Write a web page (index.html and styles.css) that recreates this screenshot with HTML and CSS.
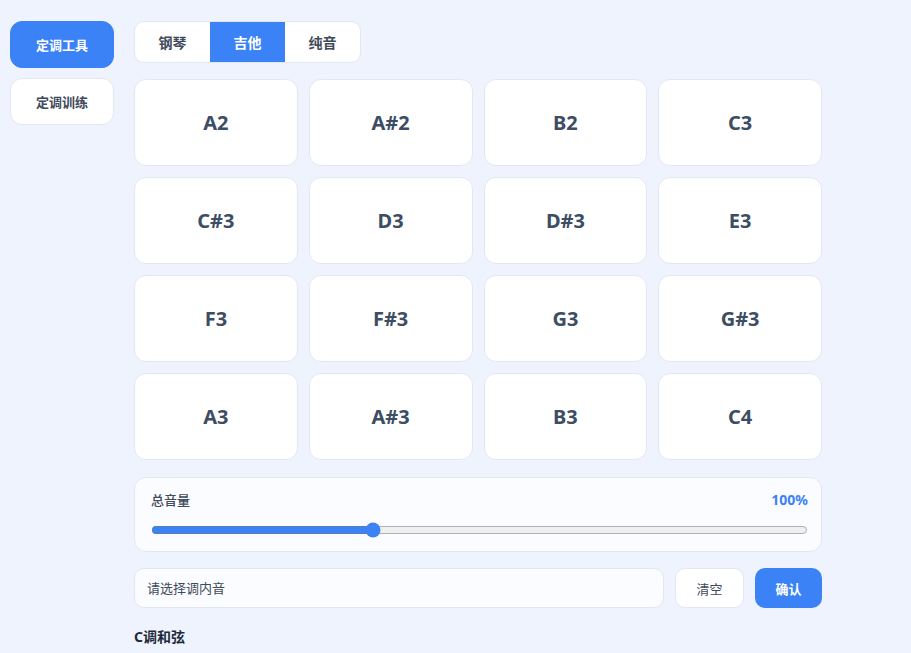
FILE: index.html
```html
<!DOCTYPE html>
<html lang="zh-CN">

<head>
    <meta charset="UTF-8">
    <meta name="viewport" content="width=device-width, initial-scale=1.0">
    <title>定调工具</title>
    <link rel="stylesheet" href="styles.css">
</head>

<body>
    <div class="layout">
        <nav class="sidebar">
            <button class="side-btn active">定调工具</button>
            <button class="side-btn">定调训练</button>
        </nav>

        <main class="main">
            <div class="tabs">
                <button class="tab">钢琴</button>
                <button class="tab active">吉他</button>
                <button class="tab">纯音</button>
            </div>

            <div class="notes">
                <button class="note">A2</button>
                <button class="note">A#2</button>
                <button class="note">B2</button>
                <button class="note">C3</button>
                <button class="note">C#3</button>
                <button class="note">D3</button>
                <button class="note">D#3</button>
                <button class="note">E3</button>
                <button class="note">F3</button>
                <button class="note">F#3</button>
                <button class="note">G3</button>
                <button class="note">G#3</button>
                <button class="note">A3</button>
                <button class="note">A#3</button>
                <button class="note">B3</button>
                <button class="note">C4</button>
            </div>

            <div class="volume">
                <div class="volume-head">
                    <span class="volume-label">总音量</span>
                    <span class="volume-value">100%</span>
                </div>
                <input class="volume-range" type="range" min="0" max="300" value="100">
            </div>

            <div class="answer-row">
                <input class="answer-input" type="text" placeholder="请选择调内音">
                <button class="btn-clear">清空</button>
                <button class="btn-confirm">确认</button>
            </div>

            <h3 class="section-title">C调和弦</h3>
        </main>
    </div>
</body>

</html>
```

FILE: styles.css
```css
body {
    margin: 0;
    background-color: #eef3fd;
    font-family: "Noto Sans", "Noto Sans CJK SC", sans-serif;
    color: #334155;
}

button,
input {
    font-family: inherit;
}

.layout {
    display: flex;
    gap: 20px;
    padding: 21px 10px 0 10px;
}

.sidebar {
    display: flex;
    flex-direction: column;
    gap: 10px;
    width: 104px;
    flex-shrink: 0;
}

.side-btn {
    height: 47px;
    border: 1px solid #e2e8f3;
    border-radius: 12px;
    background: #fff;
    color: #3f4a5a;
    font-size: 13px;
    font-weight: 700;
    cursor: pointer;
}

.side-btn.active {
    background: #3b82f6;
    border-color: #3b82f6;
    color: #fff;
}

.main {
    width: 688px;
}

.tabs {
    display: inline-flex;
    height: 42px;
    border: 1px solid #e2e8f3;
    border-radius: 10px;
    background: #fff;
    overflow: hidden;
    box-sizing: border-box;
}

.tab {
    width: 75px;
    border: none;
    background: transparent;
    color: #3f4a5a;
    font-size: 14px;
    font-weight: 700;
    cursor: pointer;
}

.tab.active {
    background: #3b82f6;
    color: #fff;
}

.notes {
    display: grid;
    grid-template-columns: repeat(4, 1fr);
    gap: 11px;
    margin-top: 16px;
}

.note {
    height: 87px;
    border: 1px solid #e2e8f3;
    border-radius: 12px;
    background: #fff;
    color: #3d4d63;
    font-size: 20px;
    font-weight: 700;
    cursor: pointer;
}

.volume {
    margin-top: 17px;
    padding: 12px 13px 13px 16px;
    border: 1px solid #e2e8f3;
    border-radius: 12px;
    background: #fbfcff;
}

.volume-head {
    display: flex;
    justify-content: space-between;
    align-items: center;
}

.volume-label {
    font-size: 13px;
    font-weight: 500;
    color: #3f4a5a;
}

.volume-value {
    font-size: 14px;
    font-weight: 700;
    color: #3b82f6;
}

.volume-range {
    display: block;
    width: 100%;
    margin: 13px 0 0 0;
    accent-color: #3b82f6;
}

.answer-row {
    display: flex;
    gap: 11px;
    margin-top: 16px;
    height: 40px;
}

.answer-input {
    flex: 1;
    padding: 0 12px;
    border: 1px solid #e2e8f3;
    border-radius: 10px;
    background: #fbfcff;
    font-size: 13px;
    color: #334155;
}

.answer-input::placeholder {
    color: #3f4a5a;
}

.btn-clear {
    width: 69px;
    border: 1px solid #e2e8f3;
    border-radius: 10px;
    background: #fff;
    color: #3f4a5a;
    font-size: 13px;
    cursor: pointer;
}

.btn-confirm {
    width: 67px;
    border: none;
    border-radius: 10px;
    background: #3b82f6;
    color: #fff;
    font-size: 13px;
    font-weight: 700;
    cursor: pointer;
}

.section-title {
    margin: 18px 0 0 0;
    font-size: 14px;
    font-weight: 700;
    color: #1e2a3a;
}
```
